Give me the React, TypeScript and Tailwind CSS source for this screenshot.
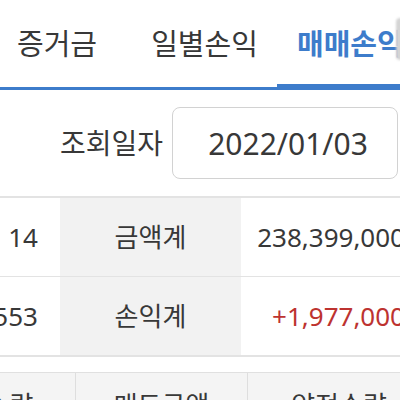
import React from "react";

export default function App() {
  return (
    <div
      className="relative w-[400px] h-[400px] overflow-hidden bg-white text-[#383838]"
      style={{ fontFamily: '"Noto Sans", "Noto Sans CJK KR", sans-serif' }}
    >
      {/* Tabs */}
      <div className="flex h-[90px] items-stretch">
        <div className="w-[132px] shrink-0 border-b-[3px] border-[#3d7ccb] flex items-center pl-[17px] text-[29px] leading-none">
          증거금
        </div>
        <div className="w-[145px] shrink-0 border-b-[3px] border-[#3d7ccb] flex items-center justify-center text-[29px] leading-none">
          일별손익
        </div>
        <div className="w-[160px] shrink-0 border-b-[6px] border-[#3d7ccb] flex items-center pl-[20px] pt-[3px] text-[29px] leading-none font-bold text-[#3d7ccb] whitespace-nowrap">
          매매손익
        </div>
      </div>
      <div className="absolute right-[-4px] top-[18px] w-[8px] h-[42px] rounded-full bg-[#d4d4d4] blur-[1px]" />

      {/* Date row */}
      <div className="flex h-[106px] items-center justify-end pr-[2px]">
        <div className="text-[28px] mr-[9px] leading-none">조회일자</div>
        <div className="w-[226px] h-[72px] rounded-[8px] border border-[#d2d2d2] flex items-center justify-center text-[30px] pl-[6px]">
          2022/01/03
        </div>
      </div>

      {/* Summary table */}
      <div className="border-t-2 border-b-2 border-[#e3e3e3]">
        <div className="flex h-[79px] border-b border-[#e3e3e3] text-[26px]">
          <div className="w-[120px] ml-[-60px] shrink-0 flex items-center justify-end pr-[22px]">14</div>
          <div className="w-[181px] shrink-0 bg-[#f2f2f2] flex items-center justify-center">금액계</div>
          <div className="w-[200px] shrink-0 flex items-center justify-end pr-[36px] whitespace-nowrap">238,399,000</div>
        </div>
        <div className="flex h-[78px] text-[26px]">
          <div className="w-[120px] ml-[-60px] shrink-0 flex items-center justify-end pr-[22px]">1,553</div>
          <div className="w-[181px] shrink-0 bg-[#f2f2f2] flex items-center justify-center">손익계</div>
          <div className="w-[200px] shrink-0 flex items-center justify-end pr-[36px] whitespace-nowrap text-[#bd3330]">+1,977,000</div>
        </div>
      </div>

      {/* Detail header */}
      <div className="mt-[15px] flex h-[60px] bg-[#f4f4f4] border-t border-[#e0e0e0] text-[26px] leading-[36px]">
        <div className="w-[180px] ml-[-104px] shrink-0 border-r border-[#dedede] flex justify-center pt-[14px]">매수수량</div>
        <div className="w-[172px] shrink-0 border-r border-[#dedede] flex justify-center pt-[14px]">매도금액</div>
        <div className="w-[182px] shrink-0 flex justify-center pt-[14px]">약정수량</div>
      </div>
    </div>
  );
}
